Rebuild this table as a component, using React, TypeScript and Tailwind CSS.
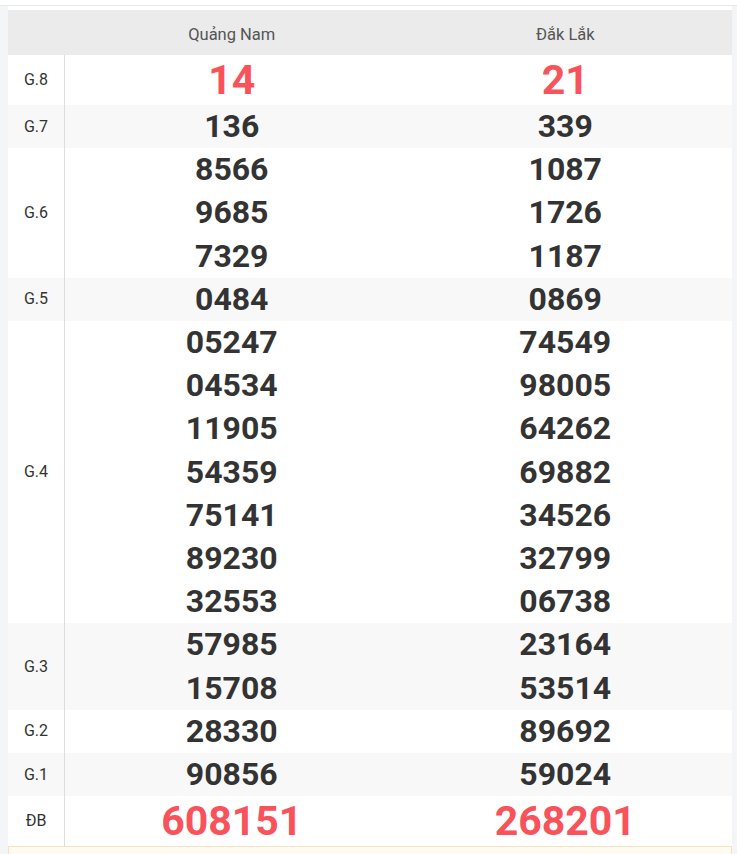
import React from 'react';

const rows = [
  { label: 'G.8', a: ['14'], b: ['21'], red: true, alt: false },
  { label: 'G.7', a: ['136'], b: ['339'], alt: true },
  { label: 'G.6', a: ['8566', '9685', '7329'], b: ['1087', '1726', '1187'], alt: false },
  { label: 'G.5', a: ['0484'], b: ['0869'], alt: true },
  {
    label: 'G.4',
    a: ['05247', '04534', '11905', '54359', '75141', '89230', '32553'],
    b: ['74549', '98005', '64262', '69882', '34526', '32799', '06738'],
    alt: false,
  },
  { label: 'G.3', a: ['57985', '15708'], b: ['23164', '53514'], alt: true },
  { label: 'G.2', a: ['28330'], b: ['89692'], alt: false },
  { label: 'G.1', a: ['90856'], b: ['59024'], alt: true },
  { label: 'ĐB', a: ['608151'], b: ['268201'], red: true, alt: false },
];

const font = { fontFamily: 'Roboto, "Noto Sans", sans-serif' };

const Cell = ({ nums, red }: { nums: string[]; red?: boolean }) => (
  <div className="flex-1 flex flex-col items-center justify-center">
    {nums.map((n, i) =>
      red ? (
        <span key={i} className="text-[41px] leading-[50px] font-bold text-[#f8525b]">
          {n}
        </span>
      ) : (
        <span key={i} className="text-[32px] leading-[43.2px] font-bold text-[#333]">
          {n}
        </span>
      )
    )}
  </div>
);

export default function App() {
  return (
    <div className="min-h-screen bg-white" style={font}>
      <div className="h-[5px] bg-white" />
      <div className="h-px bg-[#e8e8e8]" />
      <div className="flex bg-[#f4f5f7] pl-2 pr-[5px]">
        <div className="flex-1 bg-white pt-1">
          {/* Header */}
          <div className="flex h-[45px] items-center bg-[#ebebeb] pt-[5px] text-[16.5px] text-[#555]">
            <div className="w-[57px]" />
            <div className="flex-1 text-center">Quảng Nam</div>
            <div className="flex-1 text-center">Đắk Lắk</div>
          </div>

          {/* Rows */}
          {rows.map((r) => (
            <div key={r.label} className={`flex ${r.alt ? 'bg-[#f8f8f8]' : 'bg-white'}`}>
              <div className="w-[57px] shrink-0 flex items-center justify-center border-r border-[#dddddd] text-[16px] text-[#333]">
                {r.label}
              </div>
              <Cell nums={r.a} red={r.red} />
              <Cell nums={r.b} red={r.red} />
            </div>
          ))}

          {/* Footer strip */}
          <div className="h-[20px] border-t border-l border-r border-[#f3e3c3] bg-[#fffbf0]" />
        </div>
      </div>
    </div>
  );
}
